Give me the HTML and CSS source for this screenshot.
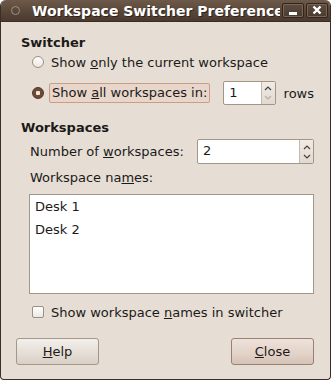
FILE: index.html
```html
<!DOCTYPE html>
<html lang="en">
<head>
    <meta charset="UTF-8">
    <title>Workspace Switcher Preferences</title>
    <link rel="stylesheet" href="styles.css">
</head>
<body>
    <div class="window">
        <div class="titlebar">
            <span class="title-icon"></span>
            <span class="title-text">Workspace Switcher Preferences</span>
            <span class="wm-btn">
                <svg width="20" height="13" viewBox="0 0 20 13"><rect x="6" y="8" width="8" height="3" fill="#fff"/></svg>
            </span>
            <span class="wm-btn">
                <svg width="20" height="13" viewBox="0 0 20 13"><path d="M6.5 2.5 L13.5 9.5 M13.5 2.5 L6.5 9.5" stroke="#fff" stroke-width="2.4"/></svg>
            </span>
        </div>

        <div class="content">
            <div class="heading">Switcher</div>
            <div class="section">
                <div class="row radio-row">
                    <span class="radio"></span>
                    <span class="label">Show <u>o</u>nly the current workspace</span>
                </div>
                <div class="row radio-row second">
                    <span class="radio checked"></span>
                    <span class="label focused">Show <u>a</u>ll workspaces in:</span>
                    <span class="spin rows-spin">
                        <span class="spin-entry">1</span>
                        <span class="spin-arrows">
                            <svg width="12" height="9" viewBox="0 0 12 9"><path d="M3 6 L6 3 L9 6" fill="none" stroke="#4a4038" stroke-width="1.2"/></svg>
                            <svg width="12" height="9" viewBox="0 0 12 9"><path d="M3 3 L6 6 L9 3" fill="none" stroke="#b8aea4" stroke-width="1.2"/></svg>
                        </span>
                    </span>
                    <span class="after">rows</span>
                </div>
            </div>

            <div class="heading workspaces">Workspaces</div>
            <div class="section">
                <div class="row number-row">
                    <span class="label">Number of <u>w</u>orkspaces:</span>
                    <span class="spin count-spin">
                        <span class="spin-entry">2</span>
                        <span class="spin-arrows">
                            <svg width="12" height="9" viewBox="0 0 12 9"><path d="M3 6 L6 3 L9 6" fill="none" stroke="#4a4038" stroke-width="1.2"/></svg>
                            <svg width="12" height="9" viewBox="0 0 12 9"><path d="M3 3 L6 6 L9 3" fill="none" stroke="#4a4038" stroke-width="1.2"/></svg>
                        </span>
                    </span>
                </div>
                <div class="names-label">Workspace na<u>m</u>es:</div>
                <div class="names-list">
                    <div class="name-item">Desk 1</div>
                    <div class="name-item">Desk 2</div>
                </div>
                <div class="row check-row">
                    <span class="checkbox"></span>
                    <span class="label">Show workspace <u>n</u>ames in switcher</span>
                </div>
            </div>

            <div class="buttons">
                <button class="btn"><u>H</u>elp</button>
                <button class="btn default"><u>C</u>lose</button>
            </div>
        </div>
    </div>
</body>
</html>
```

FILE: styles.css
```css
* {
    margin: 0;
    padding: 0;
    box-sizing: border-box;
}

body {
    background: #ffffff;
    font-family: 'DejaVu Sans', sans-serif;
    font-size: 13px;
    color: #1c1a18;
}

.window {
    width: 331px;
    height: 380px;
    background: #e6ded5;
    border: 1px solid #3b2e25;
    border-top: none;
    border-radius: 6px 6px 4px 4px;
    overflow: hidden;
}

.titlebar {
    height: 22px;
    display: flex;
    align-items: center;
    background: linear-gradient(#6e5a4a 0%, #5a4839 50%, #4a3a2f 100%);
    border-bottom: 1px solid #3a2d24;
    padding-left: 10px;
    padding-right: 2px;
}

.title-icon {
    width: 9px;
    height: 9px;
    border-radius: 50%;
    border: 1px solid #9c9088;
    flex-shrink: 0;
}

.title-text {
    flex: 1;
    margin-left: 12px;
    font-weight: bold;
    font-size: 14px;
    color: #ffffff;
    white-space: nowrap;
    overflow: hidden;
    text-shadow: 1px 1px 0 #2e231b;
}

.wm-btn {
    width: 22px;
    height: 15px;
    margin-left: 2px;
    border: 1px solid #30251e;
    border-radius: 2px;
    background: linear-gradient(#5e4c3f, #4a3b30);
    box-shadow: inset 0 0 0 1px #7a6657;
    display: flex;
    align-items: center;
    justify-content: center;
    flex-shrink: 0;
}

.content {
    padding: 12px 16px 0 20px;
}

.heading {
    height: 18px;
    line-height: 18px;
    font-weight: bold;
}

.heading.workspaces {
    margin-top: 14px;
}

.section {
    padding-left: 9px;
}

.row {
    display: flex;
    align-items: center;
}

.radio-row {
    height: 20px;
    padding-left: 2px;
}

.radio-row.second {
    height: 24px;
    margin-top: 9px;
}

.radio {
    width: 12px;
    height: 12px;
    border-radius: 50%;
    border: 1px solid #9c8e82;
    background: linear-gradient(#ffffff, #ece7e2);
    margin-right: 7px;
    flex-shrink: 0;
}

.radio.checked {
    border: 1px solid #4e3424;
    background: radial-gradient(circle, #f4e6de 0, #f4e6de 2px, #6e4a35 2.5px);
}

.label {
    white-space: nowrap;
}

.label.focused {
    height: 20px;
    line-height: 18px;
    padding: 0 2px;
    margin-left: -2px;
    border: 1px solid #c99d86;
    border-radius: 2px;
    background: #e8d6cb;
}

.spin {
    display: flex;
    height: 24px;
    border: 1px solid #a49585;
    border-radius: 2px;
    background: #ffffff;
}

.rows-spin {
    width: 54px;
    margin-left: 13px;
}

.count-spin {
    width: 117px;
    height: 25px;
    margin-left: auto;
}

.spin-entry {
    flex: 1;
    padding-left: 5px;
    line-height: 22px;
}

.spin-arrows {
    width: 14px;
    display: flex;
    flex-direction: column;
    justify-content: center;
    align-items: center;
    background: linear-gradient(#f0ebe6, #e2dad1);
    border-left: 1px solid #c5b9ae;
}

.after {
    margin-left: 8px;
}

.number-row {
    height: 25px;
    margin-top: 2px;
}

.names-label {
    height: 18px;
    line-height: 18px;
    margin-top: 5px;
}

.names-list {
    height: 100px;
    margin-top: 7px;
    margin-left: -1px;
    background: #ffffff;
    border: 1px solid #a3978a;
    padding-left: 5px;
}

.name-item {
    height: 23px;
    line-height: 23px;
}

.check-row {
    height: 20px;
    margin-top: 8px;
    padding-left: 2px;
}

.checkbox {
    width: 12px;
    height: 12px;
    border: 1px solid #9c8e82;
    border-radius: 2px;
    background: linear-gradient(#ffffff, #ece7e2);
    margin-right: 7px;
}

.buttons {
    display: flex;
    justify-content: space-between;
    margin-top: 16px;
    margin-left: -5px;
}

.btn {
    width: 83px;
    height: 27px;
    font-family: 'DejaVu Sans', sans-serif;
    font-size: 13px;
    color: #1c1a18;
    border: 1px solid #a59687;
    border-radius: 3px;
    background: linear-gradient(#f3efeb, #e4ddd5 60%, #d9d0c6);
}

.btn.default {
    border-color: #9a8072;
    background: linear-gradient(#eee2da, #e2d2c8 60%, #d6c2b6);
}
```
